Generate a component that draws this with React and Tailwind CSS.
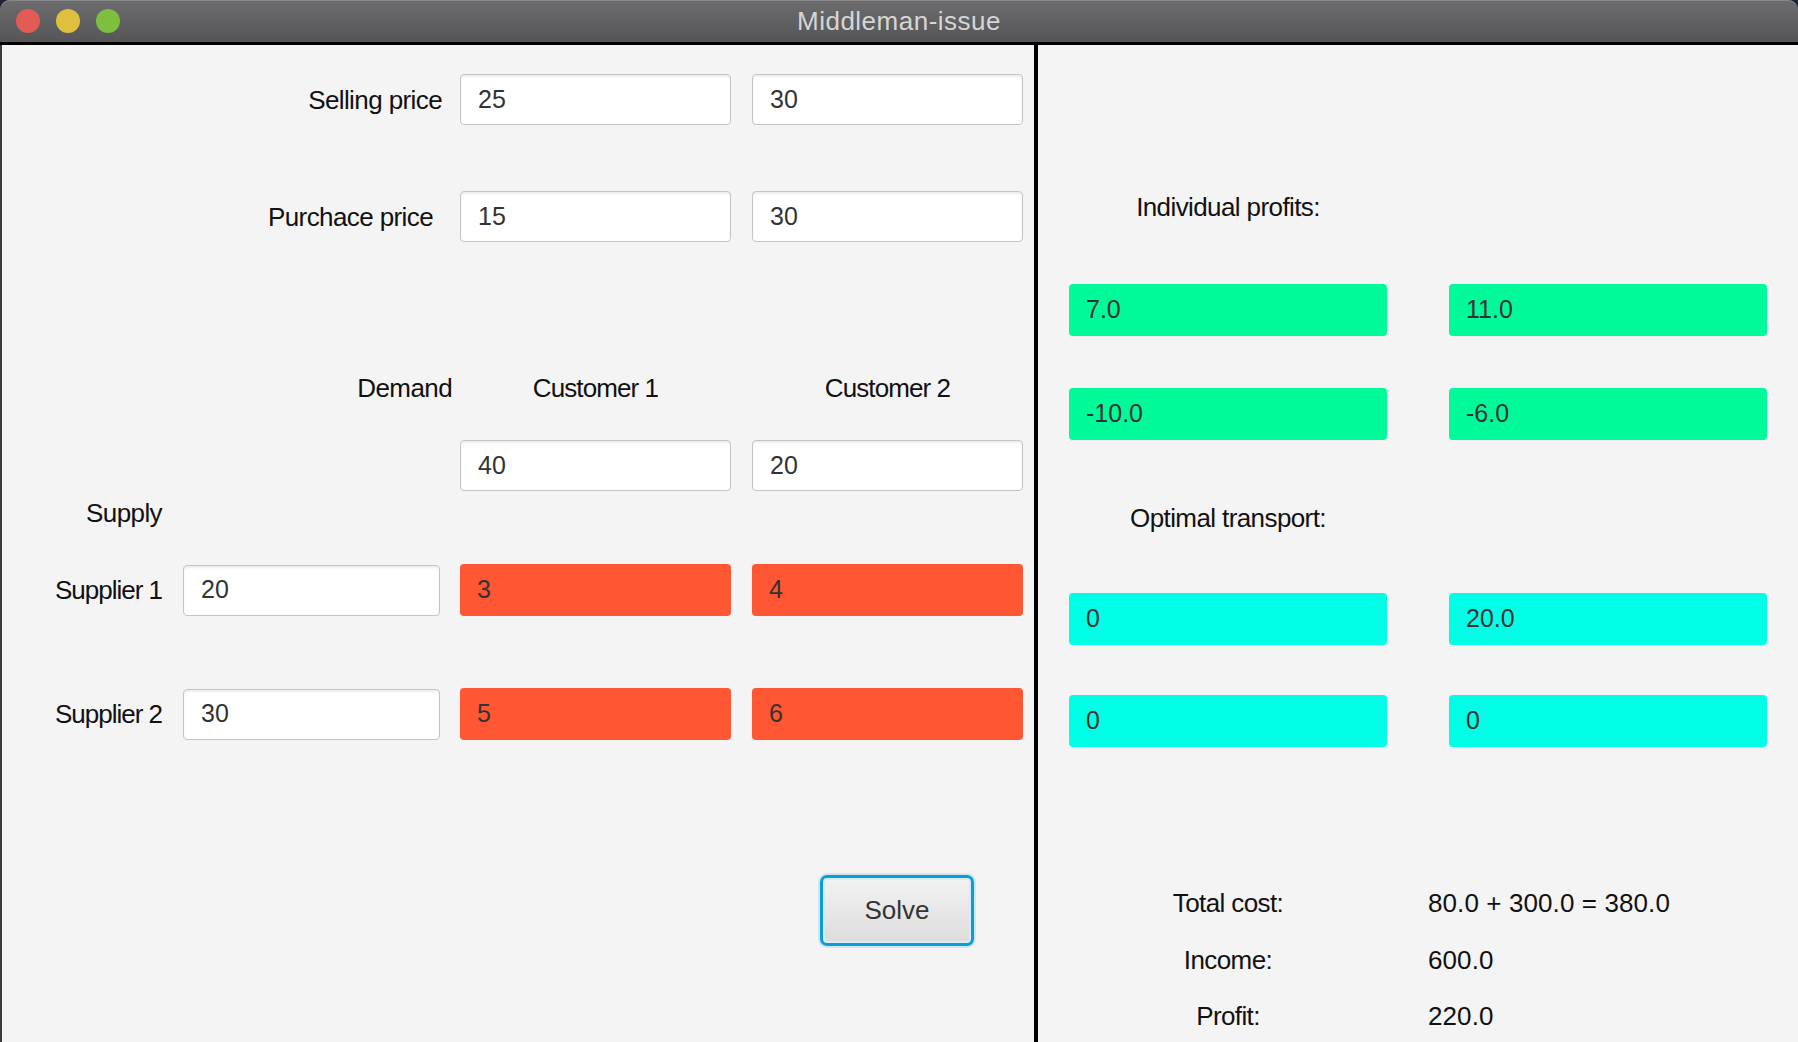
import React from "react";

const labelCls = "text-[26px] leading-[30px] tracking-[-0.6px] text-[#111]";
const valueCls = "text-[26px] leading-[30px] tracking-[0.1px] text-[#111]";
const boxBase = "flex h-[51px] items-center rounded-[4px] pl-[17px] text-[25px] text-[#333]";
const inputCls = `${boxBase} border border-[#c4c4c4] bg-white shadow-[inset_0_2px_2px_rgba(0,0,0,0.07)]`;

function Field({ className = "", children }) {
  return <div className={`${inputCls} ${className}`}>{children}</div>;
}

function Cost({ className = "", children }) {
  return <div className={`${boxBase} h-[52px] bg-[#ff5733] ${className}`}>{children}</div>;
}

function Result({ color, className = "", children }) {
  return <div className={`${boxBase} h-[52px] w-[318px] ${color} ${className}`}>{children}</div>;
}

export default function App() {
  return (
    <div className="flex h-[1042px] w-[1798px] flex-col overflow-hidden bg-[#1f2430] font-['Liberation_Sans',Arial,sans-serif]">
      {/* title bar */}
      <div className="grid h-[45px] shrink-0 grid-cols-[1fr_auto_1fr] items-center rounded-t-[10px] border-b-[3px] border-black bg-gradient-to-b from-[#6d6d70] to-[#555557] shadow-[inset_0_1px_0_#8a8a8c]">
        <div className="flex items-center gap-[16px] pl-[16px]">
          <span className="h-[24px] w-[24px] rounded-full bg-[#e25b55]" />
          <span className="h-[24px] w-[24px] rounded-full bg-[#dfbf3d]" />
          <span className="h-[24px] w-[24px] rounded-full bg-[#7fbf3f]" />
        </div>
        <div className="pt-[1px] text-[26px] tracking-[0.5px] text-[#d6d6d6]">Middleman-issue</div>
        <div />
      </div>

      <div className="flex flex-1 border-l-[2px] border-[#3a3a3a] bg-[#f4f4f4]">
        {/* left: inputs */}
        <div className="flex w-[1036px] shrink-0 flex-col border-r-[4px] border-black pt-[29px]">
          <div className="flex items-center">
            <div className={`${labelCls} w-[458px] pr-[18px] text-right`}>Selling price</div>
            <Field className="w-[271px]">25</Field>
            <Field className="ml-[21px] w-[271px]">30</Field>
          </div>

          <div className="mt-[66px] flex items-center">
            <div className={`${labelCls} w-[458px] pr-[27px] text-right`}>Purchace price</div>
            <Field className="w-[271px]">15</Field>
            <Field className="ml-[21px] w-[271px]">30</Field>
          </div>

          <div className="mt-[131px] flex items-center">
            <div className={`${labelCls} w-[458px] pr-[8px] text-right`}>Demand</div>
            <div className={`${labelCls} w-[271px] text-center tracking-[-0.9px]`}>Customer 1</div>
            <div className={`${labelCls} ml-[21px] w-[271px] text-center tracking-[-0.9px]`}>Customer 2</div>
          </div>

          <div className="mt-[37px] flex items-center">
            <div className="w-[458px]" />
            <Field className="w-[271px]">40</Field>
            <Field className="ml-[21px] w-[271px]">20</Field>
          </div>

          <div className={`${labelCls} mt-[7px] w-[160px] text-right`}>Supply</div>

          <div className="mt-[36px] flex items-center">
            <div className={`${labelCls} w-[181px] pr-[21px] text-right tracking-[-1px]`}>Supplier 1</div>
            <Field className="w-[257px]">20</Field>
            <Cost className="ml-[20px] w-[271px]">3</Cost>
            <Cost className="ml-[21px] w-[271px]">4</Cost>
          </div>

          <div className="mt-[72px] flex items-center">
            <div className={`${labelCls} w-[181px] pr-[21px] text-right tracking-[-1px]`}>Supplier 2</div>
            <Field className="w-[257px]">30</Field>
            <Cost className="ml-[20px] w-[271px]">5</Cost>
            <Cost className="ml-[21px] w-[271px]">6</Cost>
          </div>

          <button
            type="button"
            className="ml-[818px] mt-[135px] flex h-[71px] w-[154px] items-center justify-center rounded-[7px] border-[3px] border-[#0a9ed8] bg-gradient-to-b from-[#f3f3f3] to-[#dcdcdc] text-[26px] text-[#333] shadow-[inset_0_0_0_2px_#d6ecf6,0_0_0_2px_rgba(10,158,216,0.15)]"
          >
            Solve
          </button>
        </div>

        {/* right: results */}
        <div className="flex flex-1 flex-col pl-[31px] pt-[147px]">
          <div className={`${labelCls} w-[318px] text-center`}>Individual profits:</div>
          <div className="mt-[62px] flex">
            <Result color="bg-[#00fa9a]">7.0</Result>
            <Result color="bg-[#00fa9a]" className="ml-[62px]">11.0</Result>
          </div>
          <div className="mt-[52px] flex">
            <Result color="bg-[#00fa9a]">-10.0</Result>
            <Result color="bg-[#00fa9a]" className="ml-[62px]">-6.0</Result>
          </div>

          <div className={`${labelCls} mt-[63px] w-[318px] text-center`}>Optimal transport:</div>
          <div className="mt-[60px] flex">
            <Result color="bg-[#00ffe6]">0</Result>
            <Result color="bg-[#00ffe6]" className="ml-[62px]">20.0</Result>
          </div>
          <div className="mt-[50px] flex">
            <Result color="bg-[#00ffe6]">0</Result>
            <Result color="bg-[#00ffe6]" className="ml-[62px]">0</Result>
          </div>

          <div className="mt-[141px] flex items-center">
            <div className={`${labelCls} w-[318px] text-center`}>Total cost:</div>
            <div className={`${valueCls} ml-[41px]`}>80.0 + 300.0 = 380.0</div>
          </div>
          <div className="mt-[27px] flex items-center">
            <div className={`${labelCls} w-[318px] text-center`}>Income:</div>
            <div className={`${valueCls} ml-[41px]`}>600.0</div>
          </div>
          <div className="mt-[26px] flex items-center">
            <div className={`${labelCls} w-[318px] text-center`}>Profit:</div>
            <div className={`${valueCls} ml-[41px]`}>220.0</div>
          </div>
        </div>
      </div>
    </div>
  );
}
